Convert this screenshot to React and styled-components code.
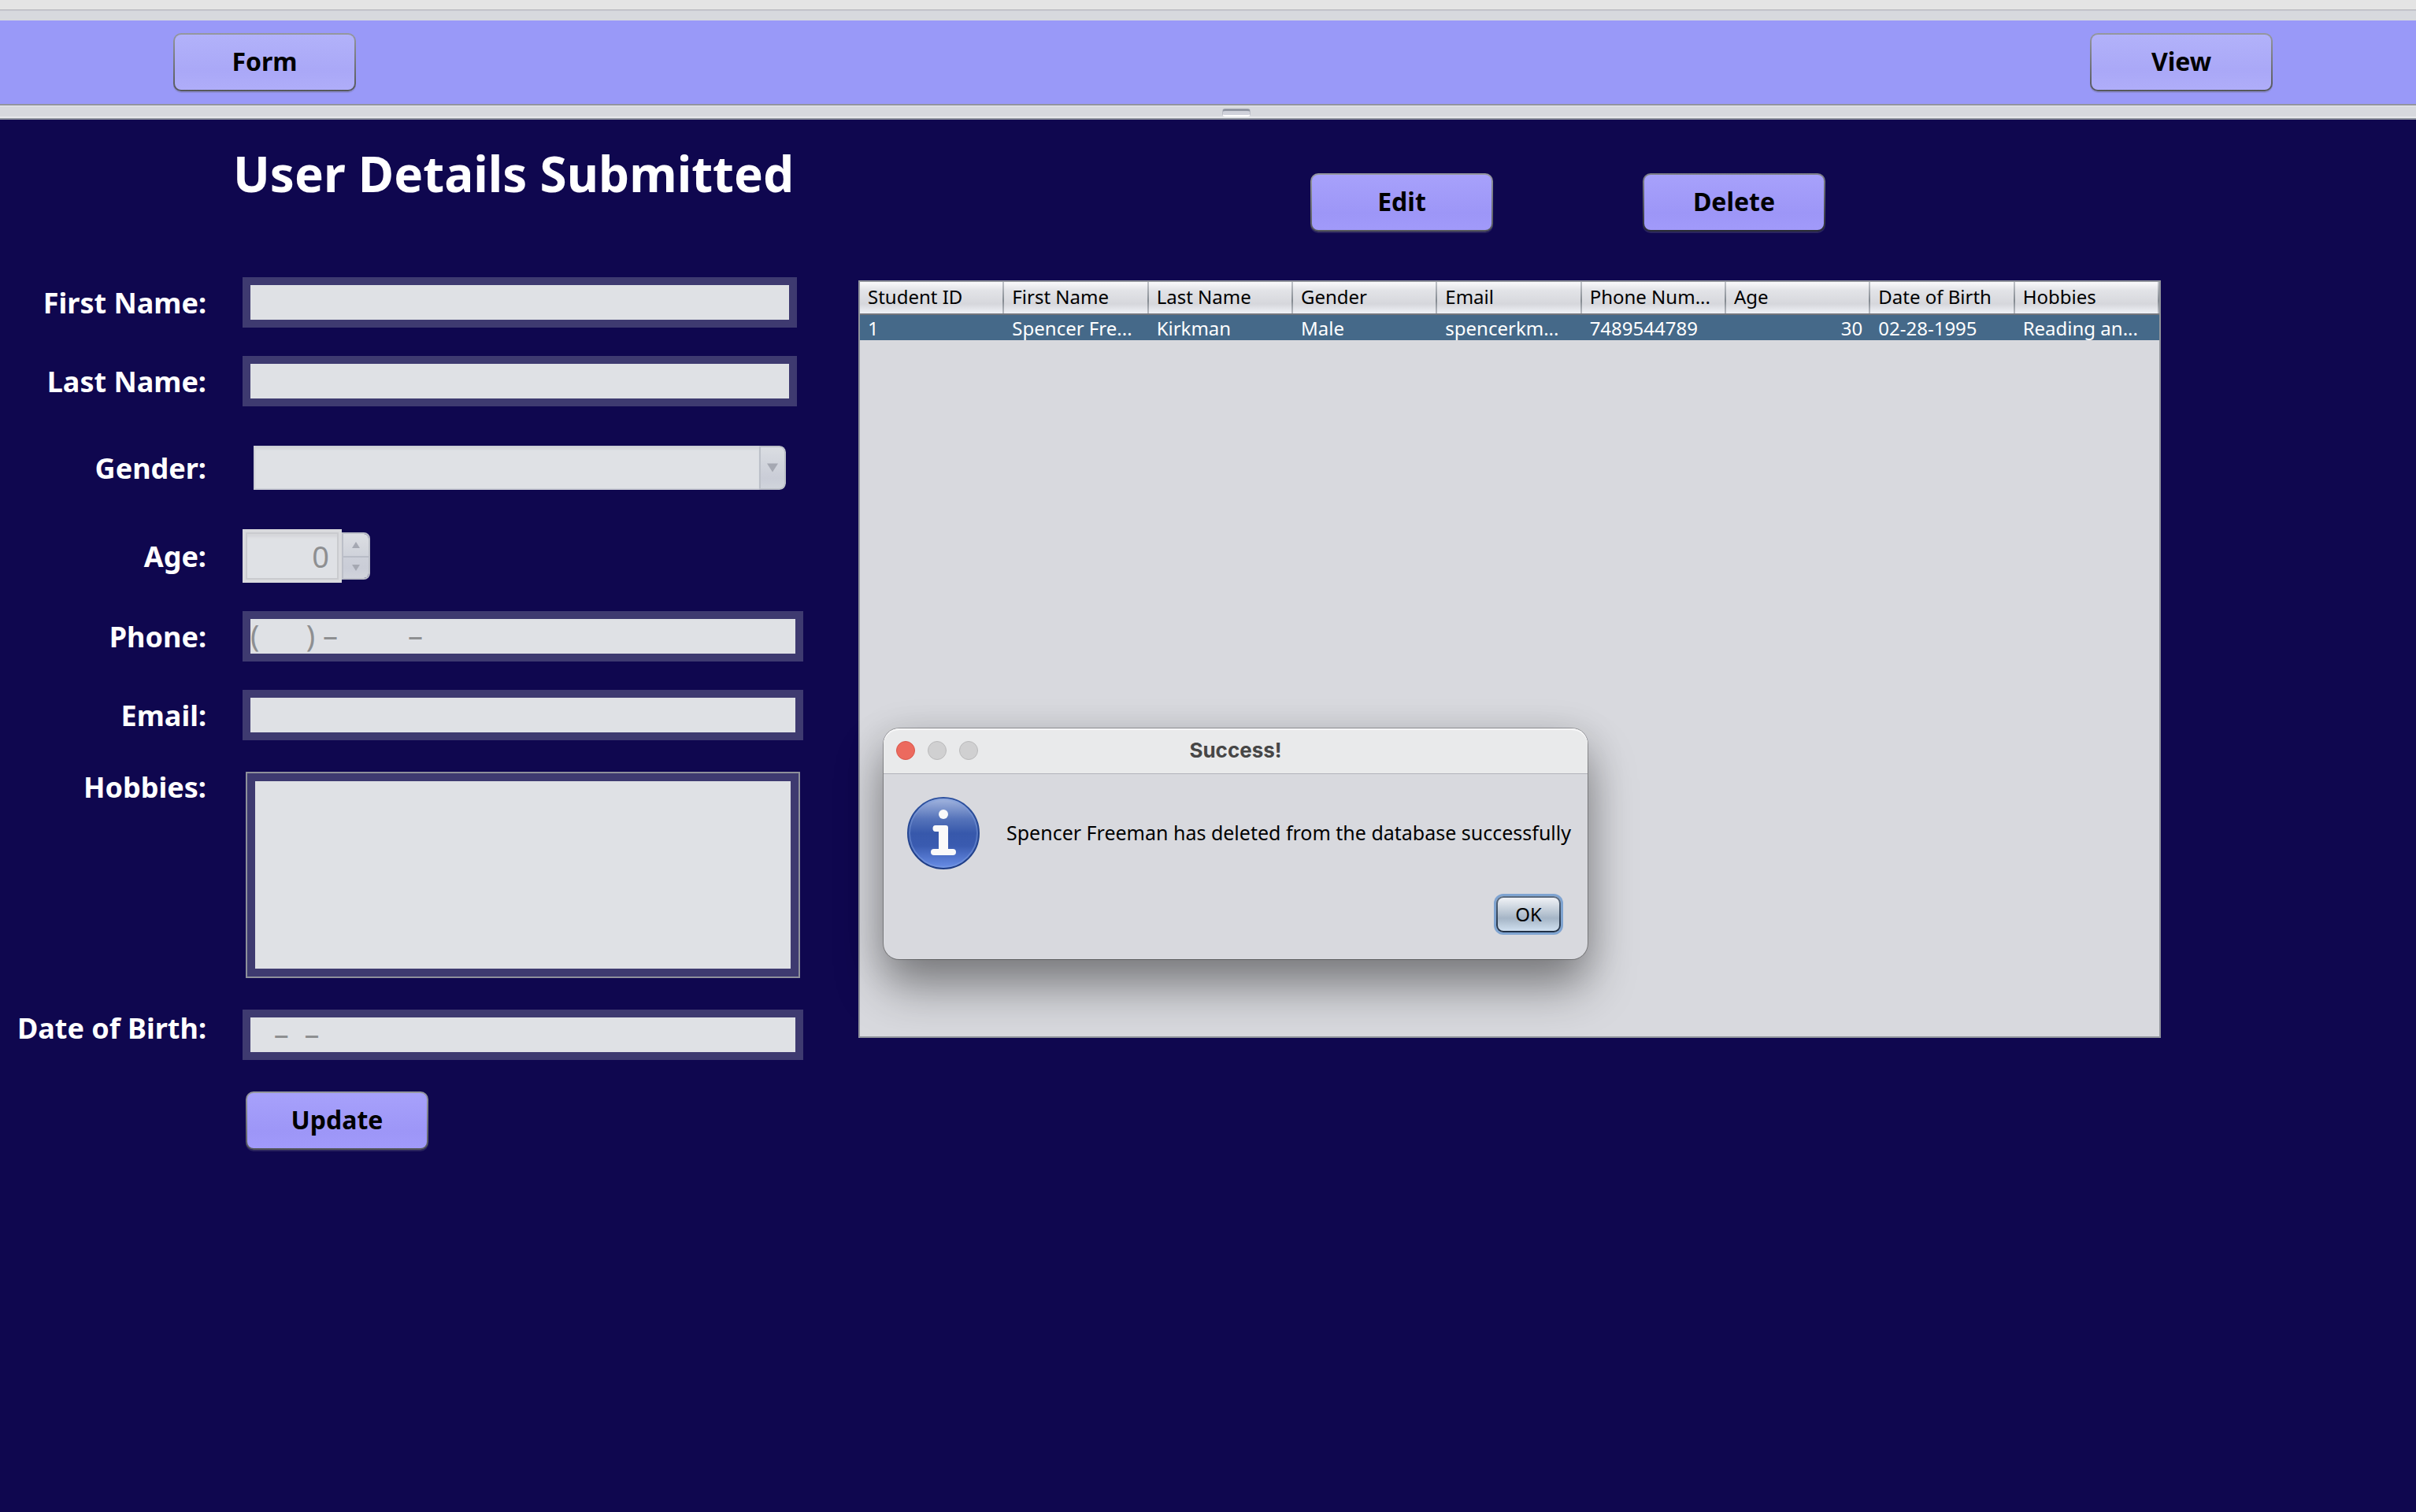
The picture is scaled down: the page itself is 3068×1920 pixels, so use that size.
import React from "react";
import styled, { createGlobalStyle, css } from "styled-components";

const GlobalStyle = createGlobalStyle`
  *, *::before, *::after { box-sizing: border-box; }
  body {
    margin: 0;
    background: #0f074f;
    font-family: "Noto Sans", "Open Sans", sans-serif;
  }
  button, input, select, textarea { font: inherit; margin: 0; }
`;

const Page = styled.div`
  position: relative;
  display: flex;
  flex-direction: column;
  min-height: 100vh;
`;

const WindowEdge = styled.div`
  height: 26px;
  background: #d7d9de;
  border-top: 12px solid #e4e4e4;
  box-shadow: inset 0 1px 0 #b3b3ba, inset 0 2px 0 #cdcfd6;
`;

const Toolbar = styled.nav`
  display: flex;
  justify-content: space-between;
  padding: 16px 182px 16px 220px;
  background: #9999f8;
`;

const tones = {
  light: "linear-gradient(#b2b2fa, #aaa8f7 65%, #afadf9)",
  violet: "linear-gradient(#a7a1fb, #9d96f7 70%, #a19afa)",
};

const ActionButton = styled.button`
  width: 232px;
  height: 74px;
  padding: 0 0 2px;
  border: 2px solid transparent;
  border-radius: 10px;
  background: ${(p) => tones[p.$tone]} padding-box,
    linear-gradient(${(p) => (p.$focused ? "#7f8188, #2b2d36" : "#95989e, #55575c")}) border-box;
  box-shadow: 0 2px 0 rgba(110, 110, 130, 0.3);
  color: #000;
  font-size: 32px;
  font-weight: 700;
  line-height: 44px;
`;

const Splitter = styled.div`
  display: flex;
  justify-content: center;
  align-items: center;
  height: 20px;
  padding: 2px 0 0 72px;
  background: #d7d9de;
  border-top: 2px solid #92959e;
  border-bottom: 2px solid #8f939f;
  box-shadow: inset 0 1px 0 #e9eaed, inset 0 -2px 0 #e6e8eb;
`;

const Grip = styled.span`
  width: 36px;
  height: 10px;
  border-radius: 4px;
  background: #d0d2db;
  border: 1px solid #b9bcc6;
  border-top: 3px solid #9297a3;
  border-bottom: 2px solid #fff;
`;

const Workspace = styled.main`
  display: flex;
  align-items: flex-start;
  gap: 70px;
  padding-right: 324px;
`;

const DetailsForm = styled.form`
  display: flex;
  flex-direction: column;
  gap: 36px;
  flex: 0 0 1020px;
`;

const Title = styled.h1`
  margin: 0;
  padding: 26px 0 54px 296px;
  font-size: 62px;
  line-height: 84px;
  font-weight: 700;
  color: #fff;
  white-space: nowrap;
`;

const Row = styled.div`
  display: grid;
  grid-template-columns: 262px 1fr;
  column-gap: 46px;
  align-items: ${(p) => (p.$top ? "start" : "center")};
  min-height: ${(p) => (p.$tall ? "84px" : "64px")};
`;

const Label = styled.label`
  padding-top: 2px;
  color: #fff;
  font-size: 36px;
  line-height: 44px;
  font-weight: 700;
  text-align: right;
  white-space: nowrap;
`;

const fieldSurface = css`
  background: #dfe1e5;
  color: #8e8f91;
  border-radius: 0;
  opacity: 1;
  outline: 0;
  font-size: 38px;
`;

const TextField = styled.input`
  ${fieldSurface}
  width: ${(p) => (p.$wide ? "712px" : "704px")};
  height: 64px;
  border: 10px solid #3e3a70;
  padding: 0 0 4px;
  line-height: 40px;
`;

const AreaFrame = styled.div`
  width: 704px;
  height: 262px;
  margin: 4px;
  border: 2px solid #8e909b;
  display: flex;
`;

const TextArea = styled.textarea`
  ${fieldSurface}
  flex: 1;
  border: 10px solid #3e3a70;
  padding: 0;
  resize: none;
`;

const SelectBox = styled.div`
  display: grid;
  grid-template-columns: 1fr 34px;
  width: 676px;
  height: 56px;
  margin-left: 14px;
  border-radius: 0 8px 8px 0;
  overflow: hidden;
`;

const Select = styled.select`
  ${fieldSurface}
  appearance: none;
  height: 56px;
  border: 2px solid #cdcfd6;
  border-right: 0;
  padding: 0 8px;
  box-shadow: inset 0 3px 2px #d5d7db;
`;

const ArrowCell = styled.span`
  display: flex;
  align-items: center;
  justify-content: center;
  background: linear-gradient(#dadde2, #cacdd7 75%, #d0d4dc);
  border: 2px solid #bcc0c8;
  border-radius: 0 8px 8px 0;
`;

const Spinner = styled.div`
  display: grid;
  grid-template-columns: 126px 36px;
  align-items: center;
  width: 162px;
`;

const SpinnerInput = styled.input`
  ${fieldSurface}
  appearance: textfield;
  width: 126px;
  height: 68px;
  border: 4px solid #d9dadd;
  padding: 0 12px;
  line-height: 44px;
  text-align: right;
  box-shadow: inset 0 0 0 2px #cacbcf, inset 0 6px 3px #d6d7da;
  &::-webkit-inner-spin-button { display: none; }
`;

const SpinnerButtons = styled.div`
  display: grid;
  grid-template-rows: 1fr 1fr;
  height: 60px;
  border: 2px solid #bcbfc8;
  border-radius: 0 8px 8px 0;
  overflow: hidden;
`;

const StepButton = styled.button`
  display: flex;
  align-items: center;
  justify-content: center;
  padding: 0;
  border: 0;
  background: ${(p) =>
    p.$down
      ? "linear-gradient(#cdd0d9, #cacdd7 50%, #d1d4dc)"
      : "linear-gradient(#dcdee3, #cfd2da)"};
  ${(p) => p.$down && "border-top: 2px solid #b9bdc7;"}
`;

const UpdateRow = styled.div`
  padding: 4px 0 0 312px;
`;

const Records = styled.section`
  flex: 1;
  min-width: 0;
  display: flex;
  flex-direction: column;
  gap: 62px;
  padding-top: 68px;
`;

const RecordActions = styled.div`
  display: flex;
  gap: 190px;
  padding-left: 574px;
`;

const TablePanel = styled.div`
  height: 962px;
  background: #d8d9de;
  border: 2px solid #91949c;
`;

const Table = styled.table`
  width: 100%;
  table-layout: fixed;
  border-collapse: separate;
  border-spacing: 0;
  font-size: 24px;
`;

const HeadCell = styled.th`
  height: 42px;
  padding: 0 0 2px 10px;
  text-align: left;
  font-weight: 400;
  line-height: 32px;
  color: #000;
  white-space: nowrap;
  border-bottom: 2px solid #73767d;
  background:
    linear-gradient(#c0c3c9, #858b92 60%, #b9bcc3) right / 2px 100% no-repeat,
    linear-gradient(#fafafc, #e3e4e8 25%, #d6d7dc 70%, #f0f2f7);
`;

const Cell = styled.td`
  height: 32px;
  padding: 2px 10px 0;
  background: #456989;
  color: #fff;
  line-height: 30px;
  white-space: nowrap;
  text-align: ${(p) => (p.$numeric ? "right" : "left")};
`;

const Dialog = styled.div`
  position: absolute;
  left: 1122px;
  top: 925px;
  width: 894px;
  background: #d8d9de;
  border-radius: 20px;
  box-shadow: 0 0 0 1px rgba(0, 0, 0, 0.28), 0 36px 60px rgba(0, 0, 0, 0.38),
    0 8px 50px rgba(0, 0, 0, 0.14);
`;

const DialogBar = styled.header`
  display: grid;
  grid-template-columns: 120px 1fr 120px;
  align-items: center;
  height: 58px;
  padding: 0 16px 2px;
  border-radius: 20px 20px 0 0;
  background: #e9eaeb;
  border-bottom: 1px solid #b2b3bb;
  box-shadow: inset 0 2px 0 #f7f7f8;
`;

const Lights = styled.div`
  display: flex;
  gap: 16px;
`;

const Light = styled.button`
  width: 24px;
  height: 24px;
  padding: 0;
  border-radius: 50%;
  border: 1px solid ${(p) => (p.$close ? "#d9574b" : "#bababb")};
  background: ${(p) => (p.$close ? "#ec6a5e" : "#d0d0d1")};
`;

const DialogTitle = styled.h2`
  margin: 0;
  font-family: Inter, sans-serif;
  font-size: 26px;
  line-height: 32px;
  font-weight: 700;
  text-align: center;
  color: #464646;
`;

const DialogBody = styled.div`
  display: flex;
  align-items: center;
  gap: 34px;
  padding: 29px 0 31px 30px;
`;

const Message = styled.p`
  margin: 0;
  padding-bottom: 2px;
  font-size: 25px;
  line-height: 32px;
  color: #000;
  white-space: nowrap;
`;

const DialogFooter = styled.footer`
  display: flex;
  justify-content: flex-end;
  padding: 3px 34px 34px;
`;

const OkButton = styled.button`
  width: 82px;
  height: 46px;
  padding: 0;
  border: 2px solid transparent;
  border-radius: 9px;
  background: linear-gradient(#f0f2f6, #c0cbd7 40%, #a5b5c6 62%, #cfdfef) padding-box,
    linear-gradient(#5c6c80, #1f2f45) border-box;
  box-shadow: 0 0 0 3px #7fa4d1;
  font-size: 24px;
  line-height: 32px;
  color: #000;
`;

const InfoGraphic = styled.svg`
  flex: none;
`;

function Triangle({ up, size = 10 }) {
  return (
    <svg width={size} height={size} viewBox="0 0 10 10" aria-hidden="true">
      <path d={up ? "M5 1 10 9H0Z" : "M0 1H10L5 9Z"} fill="#a5a8b2" />
    </svg>
  );
}

function InfoIcon() {
  return (
    <InfoGraphic width="92" height="92" viewBox="0 0 92 92" role="img" aria-label="Information">
      <defs>
        <linearGradient id="infoFill" x1="0" y1="0" x2="0" y2="1">
          <stop offset="0" stopColor="#a6b8e0" />
          <stop offset="0.3" stopColor="#5573ba" />
          <stop offset="0.5" stopColor="#3758ab" />
          <stop offset="0.68" stopColor="#3a5bb0" />
          <stop offset="1" stopColor="#6a8fe8" />
        </linearGradient>
        <linearGradient id="infoRim" x1="0" y1="0" x2="0" y2="1">
          <stop offset="0" stopColor="#2d519f" />
          <stop offset="1" stopColor="#1f3d85" />
        </linearGradient>
      </defs>
      <circle cx="46" cy="46" r="45" fill="url(#infoFill)" stroke="url(#infoRim)" strokeWidth="2" />
      <circle cx="46" cy="46" r="43" fill="none" stroke="#7f9ddd" strokeOpacity="0.45" strokeWidth="2" />
      <circle cx="46" cy="22" r="6" fill="#fafafa" />
      <path
        d="M36 36H49Q52 36 52 39V66H58Q62 66 62 70T58 74H34Q30 74 30 70T34 66H40V44H36Q32.500 44 32.500 40T36 36Z"
        fill="#fafafa"
      />
    </InfoGraphic>
  );
}

const columns = [
  { head: "Student ID", value: "1" },
  { head: "First Name", value: "Spencer Fre..." },
  { head: "Last Name", value: "Kirkman" },
  { head: "Gender", value: "Male" },
  { head: "Email", value: "spencerkm..." },
  { head: "Phone Num...", value: "7489544789" },
  { head: "Age", value: "30", numeric: true },
  { head: "Date of Birth", value: "02-28-1995" },
  { head: "Hobbies", value: "Reading an..." },
];

export default function App() {
  return (
    <Page>
      <GlobalStyle />
      <WindowEdge />
      <Toolbar>
        <ActionButton type="button" $tone="light">Form</ActionButton>
        <ActionButton type="button" $tone="light">View</ActionButton>
      </Toolbar>
      <Splitter role="separator">
        <Grip />
      </Splitter>
      <Workspace>
        <DetailsForm>
          <Title>User Details Submitted</Title>
          <Row>
            <Label htmlFor="firstName">First Name:</Label>
            <TextField id="firstName" disabled />
          </Row>
          <Row>
            <Label htmlFor="lastName">Last Name:</Label>
            <TextField id="lastName" disabled />
          </Row>
          <Row $tall>
            <Label htmlFor="gender">Gender:</Label>
            <SelectBox>
              <Select id="gender" disabled>
                <option value=""></option>
              </Select>
              <ArrowCell>
                <Triangle size={14} />
              </ArrowCell>
            </SelectBox>
          </Row>
          <Row>
            <Label htmlFor="age">Age:</Label>
            <Spinner>
              <SpinnerInput id="age" type="number" defaultValue="0" disabled />
              <SpinnerButtons>
                <StepButton type="button" aria-label="Increase age" disabled>
                  <Triangle up />
                </StepButton>
                <StepButton type="button" aria-label="Decrease age" $down disabled>
                  <Triangle />
                </StepButton>
              </SpinnerButtons>
            </Spinner>
          </Row>
          <Row>
            <Label htmlFor="phone">Phone:</Label>
            <TextField id="phone" $wide defaultValue="(      ) –         –" disabled />
          </Row>
          <Row>
            <Label htmlFor="email">Email:</Label>
            <TextField id="email" $wide disabled />
          </Row>
          <Row $top>
            <Label htmlFor="hobbies">Hobbies:</Label>
            <AreaFrame>
              <TextArea id="hobbies" disabled />
            </AreaFrame>
          </Row>
          <Row $top>
            <Label htmlFor="dob">Date of Birth:</Label>
            <TextField id="dob" $wide defaultValue="   –  –" disabled />
          </Row>
          <UpdateRow>
            <ActionButton type="button" $tone="violet">Update</ActionButton>
          </UpdateRow>
        </DetailsForm>
        <Records>
          <RecordActions>
            <ActionButton type="button" $tone="violet">Edit</ActionButton>
            <ActionButton type="button" $tone="violet" $focused>Delete</ActionButton>
          </RecordActions>
          <TablePanel>
            <Table>
              <thead>
                <tr>
                  {columns.map((c) => (
                    <HeadCell key={c.head} scope="col">{c.head}</HeadCell>
                  ))}
                </tr>
              </thead>
              <tbody>
                <tr>
                  {columns.map((c) => (
                    <Cell key={c.head} $numeric={c.numeric}>{c.value}</Cell>
                  ))}
                </tr>
              </tbody>
            </Table>
          </TablePanel>
        </Records>
      </Workspace>
      <Dialog role="dialog" aria-labelledby="dialogTitle">
        <DialogBar>
          <Lights>
            <Light type="button" $close aria-label="Close" />
            <Light type="button" aria-label="Minimize" disabled />
            <Light type="button" aria-label="Zoom" disabled />
          </Lights>
          <DialogTitle id="dialogTitle">Success!</DialogTitle>
        </DialogBar>
        <DialogBody>
          <InfoIcon />
          <Message>Spencer Freeman has deleted from the database successfully</Message>
        </DialogBody>
        <DialogFooter>
          <OkButton type="button">OK</OkButton>
        </DialogFooter>
      </Dialog>
    </Page>
  );
}
